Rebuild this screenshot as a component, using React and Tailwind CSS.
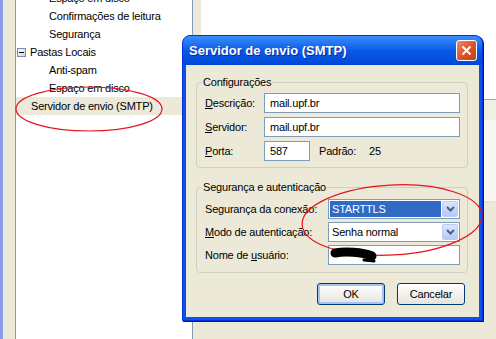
const treeRows = [
  { t: "Espaço em disco", cls: "pl-[33px]" },
  { t: "Confirmações de leitura", cls: "pl-[33px]" },
  { t: "Segurança", cls: "pl-[33px]" },
  { t: "Pastas Locais", cls: "pl-[1px]", folder: true },
  { t: "Anti-spam", cls: "pl-[33px]" },
  { t: "Espaço em disco", cls: "pl-[33px]" },
  { t: "Servidor de envio (SMTP)", cls: "pl-[15px] bg-[#ece9d8]" },
];

function Chevron() {
  return (
    <svg width="9" height="6" viewBox="0 0 9 6">
      <path d="M1 1l3.5 3.5L8 1" stroke="#4d6185" strokeWidth="2" fill="none" />
    </svg>
  );
}

function Combo({ value, selected }) {
  return (
    <div className="h-[20px] border border-[#7f9db9] bg-white flex items-stretch p-[1px] gap-[1px]">
      <div
        className={
          selected
            ? "flex-1 flex items-center pl-[2px] bg-[#316ac5] text-white"
            : "flex-1 flex items-center pl-[2px] text-black"
        }
      >
        {value}
      </div>
      <div className="w-[16px] rounded-[2px] border border-[#b9cbf6] bg-gradient-to-b from-[#dbe6fe] to-[#b4c9f8] flex items-center justify-center">
        <Chevron />
      </div>
    </div>
  );
}

function GroupBox({ title, className, children }) {
  return (
    <div className={"relative border border-[#d0d0bf] rounded-[4px] " + className}>
      <span className="absolute left-[5px] top-[-8px] px-[1px] bg-[#ece9d8] leading-[14px]">
        {title}
      </span>
      {children}
    </div>
  );
}

export default function App() {
  return (
    <div className="relative w-[496px] h-[339px] overflow-hidden flex bg-white text-[11px] tracking-[-0.2px] text-black font-['Liberation_Sans',Arial,sans-serif]">
      {/* left edge */}
      <div className="w-[3px] bg-[#8c9be8]" />
      <div className="w-[12px] bg-[#ece9d8]" />

      {/* folder tree */}
      <div className="w-[178px] border-x border-[#7f9db9] bg-white flex flex-col">
        <div className="mt-[-11px] flex flex-col">
          {treeRows.map((r, i) => (
            <div key={i} className={"h-[18px] flex items-center whitespace-nowrap " + r.cls}>
              {r.folder && (
                <span className="w-[9px] h-[9px] mr-[4px] border border-[#7b88b8] bg-gradient-to-br from-white to-[#d6d3c6] flex items-center justify-center">
                  <span className="w-[5px] h-px bg-black" />
                </span>
              )}
              {r.t}
            </div>
          ))}
        </div>
      </div>

      {/* splitter */}
      <div className="w-[8px] bg-[#ece9d8]" />

      {/* right pane */}
      <div className="flex-1 flex flex-col">
        <div className="h-[100px] bg-white border-b border-[#aca899]" />
        <div className="h-[20px] bg-[#f1efe2]" />
        <div className="h-[82px] bg-[#f8f7f3] border-b border-[#e2dfd0]" />
        <div className="flex-1 bg-[#ece9d8]" />
      </div>

      {/* SMTP dialog */}
      <div className="absolute left-[182px] top-[35px] w-[301px] h-[286px] flex flex-col rounded-t-[8px] border border-[#0831d9] bg-[#0a52e8] shadow-[1px_1px_0_#001a8c]">
        <div className="h-[29px] flex items-center justify-between pl-[6px] pr-[5px] rounded-t-[7px] bg-gradient-to-b from-[#3b8dfb] via-[#0a5ae9] to-[#0047d6]">
          <span className="text-white font-bold text-[13px] tracking-[0px] [text-shadow:1px_1px_#0b2a9a]">
            Servidor de envio (SMTP)
          </span>
          <div className="w-[21px] h-[21px] rounded-[3px] border border-white bg-gradient-to-br from-[#ee8e6c] via-[#d9552f] to-[#c13f1a] flex items-center justify-center">
            <svg width="11" height="11" viewBox="0 0 11 11">
              <path d="M1.5 1.5l8 8M9.5 1.5l-8 8" stroke="white" strokeWidth="2" />
            </svg>
          </div>
        </div>

        <div className="flex-1 px-[3px] pb-[3px] flex">
          <div className="flex-1 bg-[#ece9d8] px-[10px] flex flex-col">
            <GroupBox title="Configurações" className="mt-[17px] w-[272px] pt-[10px] pb-[6px] pl-[8px] pr-[7px]">
              <div className="grid grid-cols-[59px_1fr] gap-y-[4px] items-center">
                <span>
                  <u>D</u>escrição:
                </span>
                <div className="h-[20px] border border-[#7f9db9] bg-white pl-[5px] flex items-center">mail.upf.br</div>
                <span>
                  <u>S</u>ervidor:
                </span>
                <div className="h-[20px] border border-[#7f9db9] bg-white pl-[5px] flex items-center">mail.upf.br</div>
                <span>
                  <u>P</u>orta:
                </span>
                <div className="flex items-center">
                  <div className="w-[46px] h-[20px] border border-[#7f9db9] bg-white pl-[5px] flex items-center">587</div>
                  <span className="ml-[9px] w-[50px]">Padrão:</span>
                  <span>25</span>
                </div>
              </div>
            </GroupBox>

            <GroupBox title="Segurança e autenticação" className="mt-[19px] w-[272px] pt-[11px] pb-[7px] pl-[8px] pr-[7px]">
              <div className="grid grid-cols-[123px_1fr] gap-y-[3px] items-center">
                <span>
                  Se<u>g</u>urança da conexão:
                </span>
                <Combo value="STARTTLS" selected />
                <span>
                  <u>M</u>odo de autenticação:
                </span>
                <Combo value="Senha normal" />
                <span>
                  Nome de <u>u</u>suário:
                </span>
                <div className="h-[20px] border border-[#7f9db9] bg-white" />
              </div>
            </GroupBox>

            <div className="mt-[10px] flex justify-end gap-[12px] pr-[4px]">
              <button className="w-[68px] h-[22px] rounded-[3px] border border-[#003c74] bg-gradient-to-b from-white to-[#e6e4dc] shadow-[inset_0_0_0_2px_#a6c2f3]">
                OK
              </button>
              <button className="w-[68px] h-[22px] rounded-[3px] border border-[#003c74] bg-gradient-to-b from-white to-[#e6e4dc]">
                Cancelar
              </button>
            </div>
          </div>
        </div>
      </div>

      {/* annotations */}
      <svg className="absolute inset-0 pointer-events-none" width="496" height="339" viewBox="0 0 496 339">
        <ellipse cx="89" cy="109" rx="73" ry="22" fill="none" stroke="#e3141b" strokeWidth="1.2" />
        <ellipse cx="392" cy="220" rx="90" ry="35" fill="none" stroke="#e3141b" strokeWidth="1.2" transform="rotate(-3 392 220)" />
        <path d="M335 253 C345 251 362 252 372 256" stroke="black" strokeWidth="9" strokeLinecap="round" fill="none" />
        <path d="M364 260 L374 261" stroke="black" strokeWidth="3" strokeLinecap="round" />
      </svg>
    </div>
  );
}
